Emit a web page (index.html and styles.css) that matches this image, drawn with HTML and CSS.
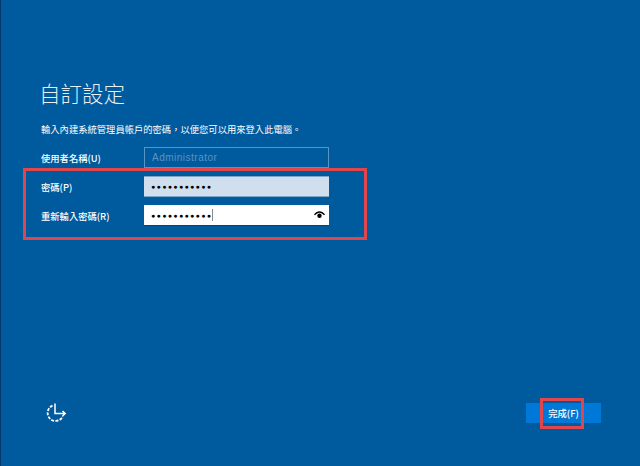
FILE: index.html
```html
<!DOCTYPE html>
<html lang="zh-TW">
<head>
<meta charset="utf-8">
<title>自訂設定</title>
<link rel="stylesheet" href="styles.css">
</head>
<body>
<main class="screen">
  <section class="content">
    <h1 class="title">自訂設定</h1>
    <p class="intro">輸入內建系統管理員帳戶的密碼，以便您可以用來登入此電腦。</p>
    <div class="form">
      <div class="row">
        <label class="label">使用者名稱(U)</label>
        <div class="field field-disabled">Administrator</div>
      </div>
      <div class="row">
        <label class="label">密碼(P)</label>
        <div class="field field-pale"><span class="dots">●●●●●●●●●●●</span></div>
      </div>
      <div class="row">
        <label class="label">重新輸入密碼(R)</label>
        <div class="field field-active">
          <span class="dots">●●●●●●●●●●●</span><span class="caret"></span>
          <svg class="eye" width="11" height="8" viewBox="0 0 11 8"><path d="M0 3.600C1.800 1.300 3.600.3 5.500.3s3.700 1 5.500 3.300l-1 .7C8.500 2.500 7 1.700 5.500 1.700S2.500 2.500 1 4.300z" fill="#000"/><circle cx="5.500" cy="4.800" r="2.200" fill="#000"/></svg>
        </div>
      </div>
    </div>
  </section>
  <footer class="footer">
    <svg class="clock" width="22" height="22" viewBox="0 0 22 22" fill="none" stroke="#fff" stroke-width="1.800">
      <path d="M7.500 3.600A8 8 0 1 0 17.800 14.500" stroke-dasharray="3 1.300"/>
      <path d="M10 1.500v10h10M17.500 9l2.700 2.500-2.700 2.500" stroke-width="1.500"/>
    </svg>
    <button class="finish">完成(F)</button>
  </footer>
  <div class="mark mark-fields"></div>
  <div class="mark mark-finish"></div>
</main>
</body>
</html>
```
FILE: styles.css
```css
* { box-sizing: border-box; }
html, body { margin: 0; height: 100%; }
body { background: #005a9e; overflow: hidden; }
.screen {
  position: relative;
  width: 640px;
  height: 466px;
  background: #005a9e;
  border-left: 1px solid #003a66;
  color: #fff;
  font-family: "Noto Sans CJK TC", "Liberation Sans", sans-serif;
  display: flex;
  flex-direction: column;
  justify-content: space-between;
  padding: 78px 39px 42px 39px;
}
.title { margin: 0 0 0 -1px; font-size: 21.500px; line-height: 30px; font-weight: 300; color: #e6eff6; }
.intro { margin: 11px 0 0 1px; font-size: 9.300px; line-height: 20px; color: #fff; white-space: nowrap; }
.form { margin-top: 8px; display: flex; flex-direction: column; gap: 8px; }
.row { display: flex; align-items: center; height: 21px; }
.label { width: 103px; margin-left: 1px; font-size: 9.300px; font-weight: 500; white-space: nowrap; }
.field {
  width: 185px; height: 21px; display: flex; align-items: center; padding: 0 4px 0 7px;
  font-family: "Liberation Sans", sans-serif; font-size: 10px;
}
.field-disabled { border: 1.500px solid #5a94c4; color: #5c93c1; letter-spacing: .5px; }
.field-pale { background: #cfdfed; border-top: 1px solid #7fa6c7; border-bottom: 1px solid #7fa6c7; color: #000; }
.field-active { background: #fff; border-bottom: 1px solid #003f8f; color: #000; }
.dots { font-size: 7px; letter-spacing: 1.350px; }
.caret { width: 1px; height: 12px; background: #888; margin-left: 0; }
.eye { margin-left: auto; }
.footer { display: flex; align-items: center; justify-content: space-between; padding-left: 5px; }
.finish {
  width: 75px; height: 20px; margin-right: 0; border: 0; padding: 0;
  background: #0078d7; color: #fff;
  font-family: "Noto Sans CJK TC", "Liberation Sans", sans-serif; font-size: 9.300px; font-weight: 500;
}
.mark { position: absolute; border: 3px solid #e0474c; }
.mark-fields { left: 22px; top: 168px; width: 344px; height: 72px; }
.mark-finish { left: 539px; top: 398px; width: 44px; height: 31px; }
```
